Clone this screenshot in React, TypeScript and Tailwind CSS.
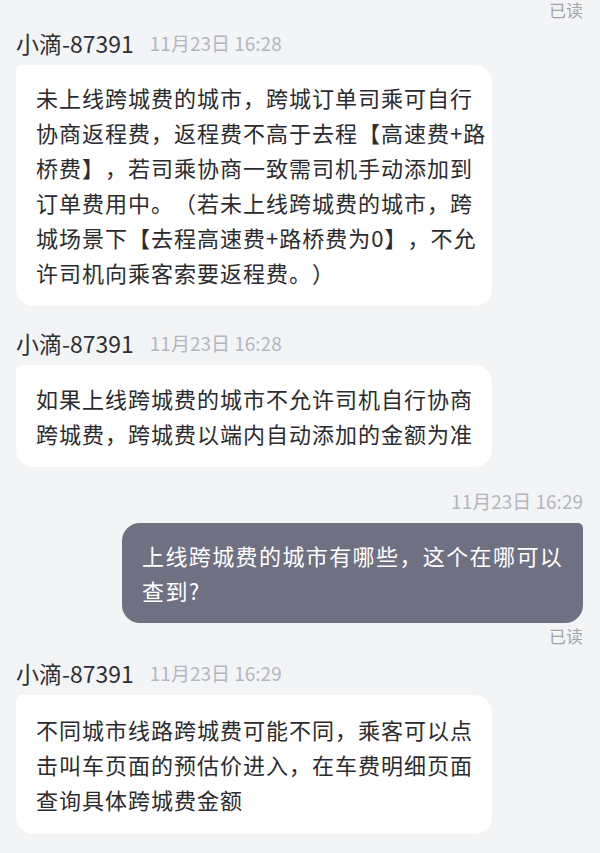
const font = { fontFamily: '"Noto Sans CJK SC", "Noto Sans", sans-serif' }

type Msg = { time: string; lines: string[]; pad?: string }

const Header = ({ time }: { time: string }) => (
  <div className="flex h-[30px] items-center gap-[16px] pl-[16px]">
    <span className="text-[23px] leading-[30px] text-[#2f2f33]">小滴-87391</span>
    <span className="text-[19px] leading-[30px] text-[#b4b6be]">{time}</span>
  </div>
)

const Incoming = ({ time, lines, pad = 'py-[15px]' }: Msg) => (
  <div className="flex flex-col">
    <Header time={time} />
    <div className={`ml-[16px] mt-[7px] w-[476px] rounded-[18px] rounded-tl-[6px] bg-white px-[20px] ${pad}`}>
      {lines.map((l) => (
        <div
          key={l}
          className="text-[22px] leading-[35px] tracking-[1px] whitespace-nowrap text-[#2b2b2e] [text-spacing-trim:space-all]"
        >
          {l}
        </div>
      ))}
    </div>
  </div>
)

const ReadMark = ({ h }: { h: string }) => (
  <div className={`pr-[17px] text-right text-[17px] text-[#a3a4aa] ${h}`}>已读</div>
)

export default function App() {
  return (
    <div style={font} className="h-[853px] w-[600px] overflow-hidden bg-[#f3f4f6]">
      <ReadMark h="pt-[1px] leading-[18px]" />

      <div className="mt-[9px]">
        <Incoming
          time="11月23日 16:28"
          lines={[
            '未上线跨城费的城市，跨城订单司乘可自行',
            '协商返程费，返程费不高于去程【高速费+路',
            '桥费】，若司乘协商一致需司机手动添加到',
            '订单费用中。（若未上线跨城费的城市，跨',
            '城场景下【去程高速费+路桥费为0】，不允',
            '许司机向乘客索要返程费。）',
          ]}
          pad="pt-[15px] pb-[16px]"
        />
      </div>

      <div className="mt-[22px]">
        <Incoming
          time="11月23日 16:28"
          lines={['如果上线跨城费的城市不允许司机自行协商', '跨城费，跨城费以端内自动添加的金额为准']}
          pad="pt-[16px] pb-[16px]"
        />
      </div>

      <div className="mt-[19px] flex flex-col items-end pr-[17px]">
        <div className="h-[30px] text-[19px] leading-[30px] text-[#b4b6be]">11月23日 16:29</div>
        <div className="mt-[7px] w-[461px] rounded-[18px] rounded-tr-[5px] bg-[#6f7082] px-[20px] py-[15px]">
          <div className="text-[22px] leading-[35px] tracking-[1.4px] whitespace-nowrap text-white [text-spacing-trim:space-all]">
            上线跨城费的城市有哪些，这个在哪可以
          </div>
          <div className="text-[22px] leading-[35px] tracking-[1.4px] text-white">查到?</div>
        </div>
      </div>
      <ReadMark h="leading-[26px]" />

      <div className="mt-[9px]">
        <Incoming
          time="11月23日 16:29"
          lines={[
            '不同城市线路跨城费可能不同，乘客可以点',
            '击叫车页面的预估价进入，在车费明细页面',
            '查询具体跨城费金额',
          ]}
          pad="pt-[17px] pb-[17px]"
        />
      </div>
    </div>
  )
}
